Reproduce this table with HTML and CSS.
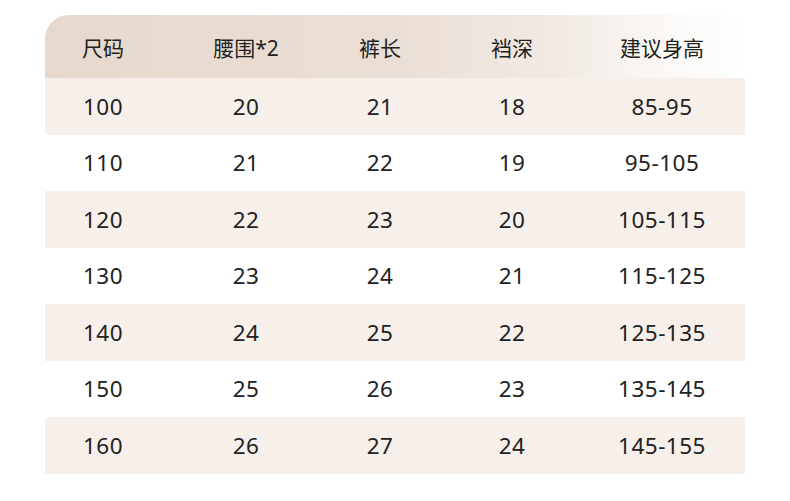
FILE: index.html
```html
<!DOCTYPE html>
<html lang="zh">
<head>
<meta charset="utf-8">
<link rel="stylesheet" href="styles.css">
</head>
<body>
<div class="table">
  <div class="row head">
    <div class="cell">尺码</div><div class="cell">腰围*2</div><div class="cell">裤长</div><div class="cell">裆深</div><div class="cell">建议身高</div>
  </div>
  <div class="row odd"><div class="cell">100</div><div class="cell">20</div><div class="cell">21</div><div class="cell">18</div><div class="cell">85-95</div></div>
  <div class="row"><div class="cell">110</div><div class="cell">21</div><div class="cell">22</div><div class="cell">19</div><div class="cell">95-105</div></div>
  <div class="row odd"><div class="cell">120</div><div class="cell">22</div><div class="cell">23</div><div class="cell">20</div><div class="cell">105-115</div></div>
  <div class="row"><div class="cell">130</div><div class="cell">23</div><div class="cell">24</div><div class="cell">21</div><div class="cell">115-125</div></div>
  <div class="row odd"><div class="cell">140</div><div class="cell">24</div><div class="cell">25</div><div class="cell">22</div><div class="cell">125-135</div></div>
  <div class="row"><div class="cell">150</div><div class="cell">25</div><div class="cell">26</div><div class="cell">23</div><div class="cell">135-145</div></div>
  <div class="row odd"><div class="cell">160</div><div class="cell">26</div><div class="cell">27</div><div class="cell">24</div><div class="cell">145-155</div></div>
</div>
</body>
</html>
```
FILE: styles.css
```css
html, body {
  margin: 0;
  padding: 0;
  background: #ffffff;
}
body {
  width: 790px;
  height: 501px;
  overflow: hidden;
  font-family: "Noto Sans", "Noto Sans CJK SC", sans-serif;
  color: #222222;
}
.table {
  margin: 15px 0 0 45px;
  width: 700px;
  display: flex;
  flex-direction: column;
}
.row {
  display: grid;
  grid-template-columns: 116px 170px 98px 166px 134px;
  padding-right: 16px;
  height: 56.5px;
  align-items: center;
  font-size: 22.5px;
  letter-spacing: 0.5px;
}
.row.head {
  height: 63px;
  font-size: 21px;
  letter-spacing: 0;
  border-top-left-radius: 24px;
  background: linear-gradient(90deg, #e6d8cc 0%, #eadfd6 50%, #f1e9e3 72%, #fbf9f7 90%, #ffffff 100%);
}
.row.odd {
  background: #f7efea;
}
.cell {
  text-align: center;
  white-space: nowrap;
}
```
